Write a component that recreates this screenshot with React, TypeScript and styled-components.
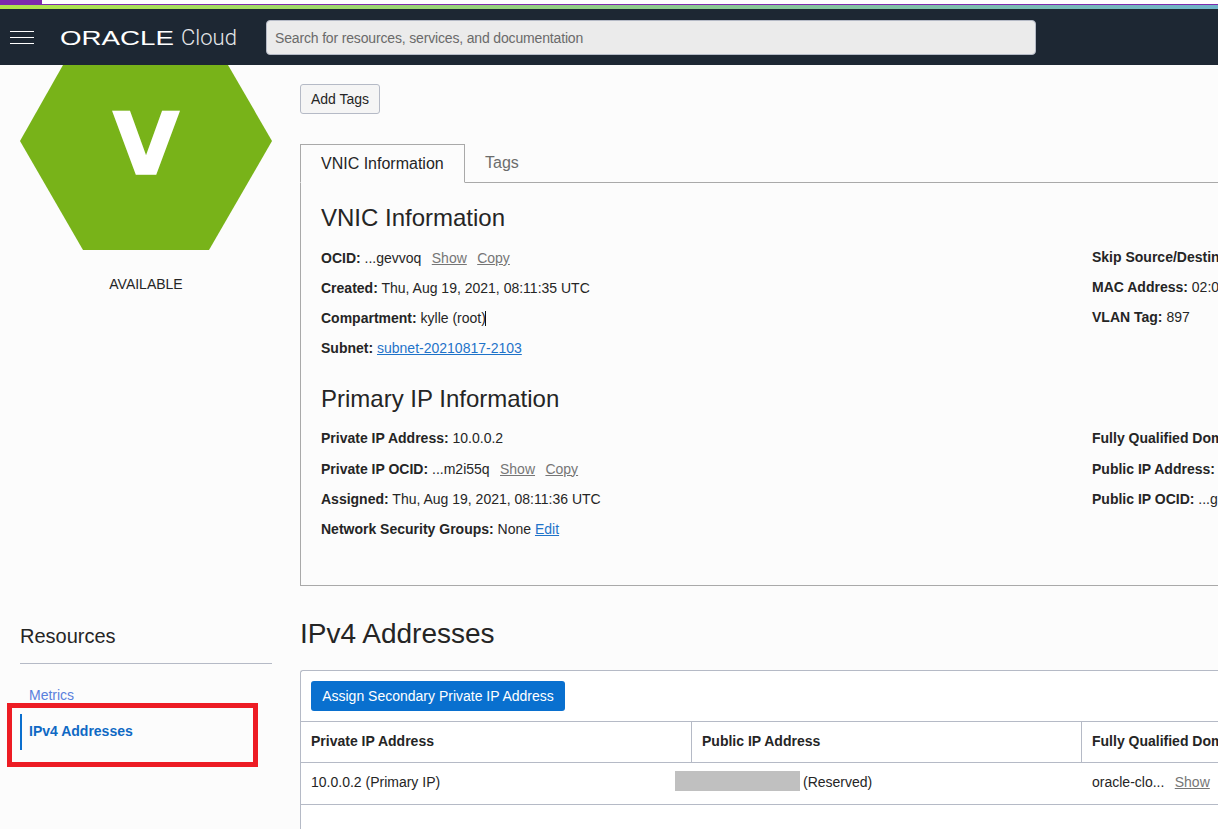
import styled, { createGlobalStyle } from 'styled-components'

const GlobalStyle = createGlobalStyle`
  html, body {
    margin: 0;
    padding: 0;
    background: #fcfcfc;
    overflow: hidden;
  }
  * { box-sizing: border-box; }
`

const Page = styled.div`
  width: 1218px;
  height: 829px;
  overflow: hidden;
  position: relative;
  background: #fcfcfc;
  color: #252525;
  font-family: 'Liberation Sans', Arial, sans-serif;
  font-size: 14px;
`

const TopStrip = styled.div`
  height: 9px;
  background: linear-gradient(90deg, #b0e549, #6fb3c9);
`

const StripWhite = styled.div`
  height: 5px;
  background: #fff;
  border-bottom: 1px solid #7d2aac;
`

const StripPurple = styled.div`
  width: 42px;
  height: 4px;
  background: #7d2aac;
`

const Header = styled.header`
  height: 56px;
  background: #1d2733;
  display: flex;
  align-items: center;
  padding-left: 10px;
`

const Burger = styled.div`
  width: 24px;
  display: flex;
  flex-direction: column;
  gap: 5px;
  margin-right: 26px;
  span {
    display: block;
    height: 1px;
    background: #fff;
  }
`

const Logo = styled.svg`
  width: 180px;
  height: 30px;
  margin-right: 26px;
  display: block;
`

const Search = styled.div`
  width: 770px;
  height: 35px;
  background: #ebebeb;
  border: 1px solid #b5bac6;
  border-radius: 4px;
  padding: 2px 0 0 8px;
  display: flex;
  align-items: center;
  color: #6a6a6a;
  letter-spacing: -0.16px;
`

const Body = styled.div`
  display: flex;
`

const Sidebar = styled.aside`
  flex: none;
  width: 300px;
  height: 764px;
  padding-left: 20px;
  display: flex;
  flex-direction: column;
`

const HexWrap = styled.div`
  position: relative;
  width: 252px;
  height: 185px;
`

const Hex = styled.svg`
  display: block;
  width: 252px;
  height: 185px;
`

const HexLetter = styled.span`
  position: absolute;
  left: 0;
  right: 0;
  top: 22px;
  text-align: center;
  color: #fff;
  font-family: 'DejaVu Sans', sans-serif;
  font-weight: 700;
  font-size: 86px;
  line-height: 114px;
  -webkit-text-stroke: 1.5px #fff;
`

const Status = styled.div`
  width: 252px;
  margin-top: 26px;
  text-align: center;
  line-height: 16px;
`

const ResourcesTitle = styled.h3`
  margin: 331px 0 0;
  width: 252px;
  height: 41px;
  font-size: 20px;
  font-weight: 400;
  line-height: 26px;
  color: #252525;
  border-bottom: 1px solid #b5bac6;
`

const NavList = styled.ul`
  list-style: none;
  margin: 14px 0 0;
  padding: 0;
  width: 252px;
`

const NavItem = styled.li<{ $active?: boolean }>`
  height: 36px;
  padding-left: ${(p) => (p.$active ? 7 : 9)}px;
  border-left: ${(p) => (p.$active ? '2px solid #0b6fce' : 'none')};
  line-height: 34px;
  font-weight: ${(p) => (p.$active ? 700 : 400)};
  color: ${(p) => (p.$active ? '#0f69c4' : '#5a80dc')};
`

const Highlight = styled.div`
  position: absolute;
  left: 7px;
  top: 703px;
  width: 251px;
  height: 64px;
  border: 5px solid #ed1c24;
`

const Main = styled.main`
  flex: none;
  width: 1300px;
  padding-top: 19px;
`

const PlainButton = styled.button`
  display: block;
  width: 80px;
  height: 30px;
  padding: 0;
  background: #f5f5f5;
  border: 1px solid #b5bac6;
  border-radius: 3px;
  color: #252525;
  font: inherit;
`

const Tabs = styled.div`
  display: flex;
  margin-top: 30px;
  height: 39px;
  border-bottom: 1px solid #a9a9a9;
`

const Tab = styled.div<{ $active?: boolean }>`
  height: 39px;
  font-size: 16px;
  padding: 9px 0 0 20px;
  line-height: 19px;
  ${(p) =>
    p.$active
      ? `
    width: 165px;
    border: 1px solid #a9a9a9;
    border-bottom: 1px solid #fcfcfc;
    color: #252525;
  `
      : `
    color: #6c6c6c;
  `}
`

const Panel = styled.section`
  height: 403px;
  border-left: 1px solid #a9a9a9;
  border-bottom: 1px solid #a9a9a9;
  padding: 20px 0 0 20px;
`

const PanelTitle = styled.h2<{ $gap?: number }>`
  margin: ${(p) => p.$gap ?? 0}px 0 0;
  font-size: 24px;
  font-weight: 400;
  line-height: 30px;
  color: #252525;
`

const InfoGrid = styled.div<{ $top: number }>`
  display: grid;
  grid-template-columns: 771px 1fr;
  margin-top: ${(p) => p.$top}px;
`

const InfoColumn = styled.div<{ $shift?: number; $gap?: number }>`
  display: flex;
  flex-direction: column;
  gap: ${(p) => p.$gap ?? 0}px;
  margin-top: ${(p) => p.$shift ?? 0}px;
`

const InfoRow = styled.div`
  height: 30px;
  line-height: 20px;
  white-space: nowrap;
`

const Label = styled.b`
  font-weight: 700;
`

const GrayLink = styled.a`
  margin-left: 6.5px;
  color: #767676;
  text-decoration: underline;
`

const BlueLink = styled.a`
  color: #1f73c9;
  text-decoration: underline;
`

const Caret = styled.span`
  display: inline-block;
  width: 1px;
  height: 15px;
  margin-left: -1px;
  background: #111;
  vertical-align: -3px;
`

const SectionTitle = styled.h2`
  margin: 30px 0 0;
  font-size: 28px;
  font-weight: 400;
  line-height: 36px;
  color: #252525;
`

const TableBox = styled.div`
  margin-top: 18px;
  border: 1px solid #b5bac6;
  border-right: none;
  border-top-left-radius: 3px;
  background: #fff;
  height: 200px;
`

const TableActions = styled.div`
  height: 51px;
  padding: 10px;
  border-bottom: 1px solid #b5bac6;
`

const PrimaryButton = styled.button`
  display: block;
  width: 254px;
  height: 30px;
  padding: 0;
  background: #0970cf;
  border: none;
  border-radius: 3px;
  color: #fff;
  font: inherit;
`

const TableRow = styled.div<{ $height: number }>`
  display: grid;
  grid-template-columns: 390px 390px 1fr;
  height: ${(p) => p.$height}px;
  border-bottom: 1px solid #b5bac6;
`

const HeadCell = styled.div`
  padding-left: 10px;
  line-height: 38px;
  font-weight: 700;
  & + & {
    border-left: 1px solid #b5bac6;
  }
`

const Cell = styled.div<{ $pad?: number }>`
  position: relative;
  padding-left: ${(p) => p.$pad ?? 10}px;
  line-height: 38px;
  white-space: nowrap;
`

const Redacted = styled.span`
  position: absolute;
  left: -16px;
  top: 8px;
  width: 125px;
  height: 20px;
  background: #c0c0c0;
`

export default function App() {
  return (
    <Page>
      <GlobalStyle />
      <TopStrip>
        <StripWhite>
          <StripPurple />
        </StripWhite>
      </TopStrip>
      <Header>
        <Burger>
          <span />
          <span />
          <span />
        </Burger>
        <Logo viewBox="0 0 180 30">
          <text
            x="0"
            y="23"
            textLength="114"
            lengthAdjust="spacingAndGlyphs"
            fill="#fff"
            fontFamily="'Liberation Sans', sans-serif"
            fontSize="21"
          >
            ORACLE
          </text>
          <text x="121" y="23" fill="#e6e8ea" fontFamily="Roboto, sans-serif" fontSize="22" fontWeight="300">
            Cloud
          </text>
        </Logo>
        <Search>Search for resources, services, and documentation</Search>
      </Header>
      <Body>
        <Sidebar>
          <HexWrap>
            <Hex viewBox="0 0 252 185">
              <polygon points="43,0 208,0 252,76 189,185 63,185 0,76" fill="#78b319" />
            </Hex>
            <HexLetter>V</HexLetter>
          </HexWrap>
          <Status>AVAILABLE</Status>
          <ResourcesTitle>Resources</ResourcesTitle>
          <NavList>
            <NavItem>Metrics</NavItem>
            <NavItem $active>IPv4 Addresses</NavItem>
          </NavList>
        </Sidebar>
        <Main>
          <PlainButton>Add Tags</PlainButton>
          <Tabs>
            <Tab $active>VNIC Information</Tab>
            <Tab>Tags</Tab>
          </Tabs>
          <Panel>
            <PanelTitle>VNIC Information</PanelTitle>
            <InfoGrid $top={15}>
              <InfoColumn>
                <InfoRow>
                  <Label>OCID:</Label> ...gevvoq <GrayLink>Show</GrayLink> <GrayLink>Copy</GrayLink>
                </InfoRow>
                <InfoRow>
                  <Label>Created:</Label> Thu, Aug 19, 2021, 08:11:35 UTC
                </InfoRow>
                <InfoRow>
                  <Label>Compartment:</Label> kylle (root)
                  <Caret />
                </InfoRow>
                <InfoRow>
                  <Label>Subnet:</Label> <BlueLink>subnet-20210817-2103</BlueLink>
                </InfoRow>
              </InfoColumn>
              <InfoColumn $shift={-1}>
                <InfoRow>
                  <Label>Skip Source/Destination Check:</Label> No
                </InfoRow>
                <InfoRow>
                  <Label>MAC Address:</Label> 02:00:17:03:A1:5C
                </InfoRow>
                <InfoRow>
                  <Label>VLAN Tag:</Label> 897
                </InfoRow>
              </InfoColumn>
            </InfoGrid>
            <PanelTitle $gap={16}>Primary IP Information</PanelTitle>
            <InfoGrid $top={14.4}>
              <InfoColumn $gap={0.2}>
                <InfoRow>
                  <Label>Private IP Address:</Label> 10.0.0.2
                </InfoRow>
                <InfoRow>
                  <Label>Private IP OCID:</Label> ...m2i55q <GrayLink>Show</GrayLink> <GrayLink>Copy</GrayLink>
                </InfoRow>
                <InfoRow>
                  <Label>Assigned:</Label> Thu, Aug 19, 2021, 08:11:36 UTC
                </InfoRow>
                <InfoRow>
                  <Label>Network Security Groups:</Label> None <BlueLink>Edit</BlueLink>
                </InfoRow>
              </InfoColumn>
              <InfoColumn $gap={0.2}>
                <InfoRow>
                  <Label>Fully Qualified Domain Name:</Label> -
                </InfoRow>
                <InfoRow>
                  <Label>Public IP Address:</Label> Reserved
                </InfoRow>
                <InfoRow>
                  <Label>Public IP OCID:</Label> ...g
                </InfoRow>
              </InfoColumn>
            </InfoGrid>
          </Panel>
          <SectionTitle>IPv4 Addresses</SectionTitle>
          <TableBox>
            <TableActions>
              <PrimaryButton>Assign Secondary Private IP Address</PrimaryButton>
            </TableActions>
            <TableRow $height={41}>
              <HeadCell>Private IP Address</HeadCell>
              <HeadCell>Public IP Address</HeadCell>
              <HeadCell>Fully Qualified Domain Name</HeadCell>
            </TableRow>
            <TableRow $height={42}>
              <Cell>10.0.0.2 (Primary IP)</Cell>
              <Cell $pad={112}>
                <Redacted />
                (Reserved)
              </Cell>
              <Cell $pad={11}>
                oracle-clo... <GrayLink>Show</GrayLink>
              </Cell>
            </TableRow>
          </TableBox>
        </Main>
      </Body>
      <Highlight />
    </Page>
  )
}
